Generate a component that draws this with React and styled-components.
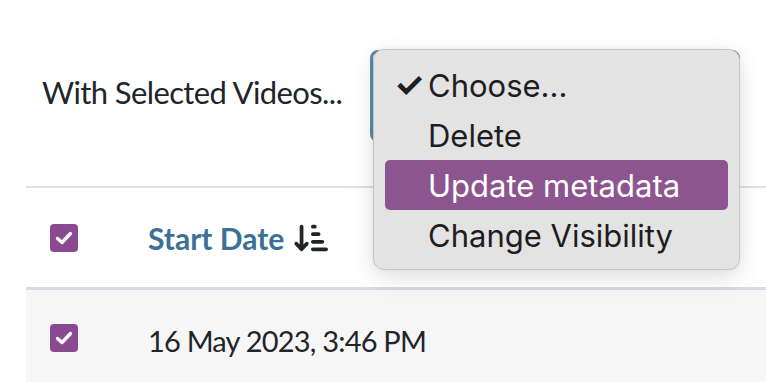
import React, { useState } from "react";
import styled, { createGlobalStyle } from "styled-components";
import { FaArrowDownShortWide } from "react-icons/fa6";

const GlobalStyle = createGlobalStyle`
    html, body {
        margin: 0;
        padding: 0;
        background: #ffffff;
        overflow: hidden;
    }
    * { box-sizing: border-box; }
`;

const options = ["Choose...", "Delete", "Update metadata", "Change Visibility"];

const rows = [{ id: 1, start: "16 May 2023, 3:46 PM", checked: true }];

// Main page component
const App = () => {
    const [selected] = useState(0);
    const [hovered] = useState(2);

    return (
        <>
            <GlobalStyle />
            <Page>
                <Toolbar>
                    <Label>With Selected Videos...</Label>
                    <SelectBox />
                </Toolbar>
                <Table>
                    <HeadRow>
                        <CheckCell>
                            <CheckBox checked />
                        </CheckCell>
                        <HeadCell>
                            Start Date
                            <SortIcon>
                                <FaArrowDownShortWide />
                            </SortIcon>
                        </HeadCell>
                    </HeadRow>
                    {rows.map((row) => (
                        <BodyRow key={row.id}>
                            <CheckCell>
                                <CheckBox checked={row.checked} />
                            </CheckCell>
                            <Cell>{row.start}</Cell>
                        </BodyRow>
                    ))}
                </Table>
                <Menu>
                    {options.map((opt, i) => (
                        <MenuItem key={opt} active={i === hovered}>
                            <Tick>{i === selected ? "✓" : ""}</Tick>
                            {opt}
                        </MenuItem>
                    ))}
                </Menu>
            </Page>
        </>
    );
};

const CheckBox = ({ checked }) => (
    <Box>
        {checked && (
            <svg width="24" height="24" viewBox="0 0 24 24">
                <path d="M5.5 12.5 L10 16.5 L18.5 7.5" fill="none" stroke="#ffffff" strokeWidth="3.4" strokeLinecap="round" strokeLinejoin="round" />
            </svg>
        )}
    </Box>
);

const Page = styled.div`
    position: relative;
    width: 766px;
    height: 382px;
    padding-left: 26px;
    font-family: "Lato", "Open Sans", sans-serif;
    color: #212529;
`;
const Toolbar = styled.div`
    height: 186px;
    display: flex;
    align-items: flex-start;
    padding-left: 16px;
`;
const Label = styled.div`
    font-size: 31px;
    letter-spacing: -0.6px;
    width: 328px;
    margin-top: 73px;
`;
const SelectBox = styled.div`
    margin-top: 50px;
    width: 370px;
    height: 92px;
    border: 3px solid #5e8bab;
    border-radius: 8px;
    background: #ffffff;
`;
const Table = styled.div`
    border-top: 2px solid #dee2e6;
`;
const HeadRow = styled.div`
    display: flex;
    align-items: center;
    height: 102px;
    border-bottom: 3px solid #d8dce2;
`;
const BodyRow = styled.div`
    display: flex;
    align-items: center;
    height: 92px;
    padding-top: 4px;
    background: #f6f6f7;
`;
const CheckCell = styled.div`
    width: 122px;
    padding-left: 24px;
    display: flex;
    align-items: center;
`;
const Box = styled.div`
    width: 28px;
    height: 28px;
    border-radius: 4px;
    background: #894a92;
    display: flex;
    align-items: center;
    justify-content: center;
`;
const HeadCell = styled.div`
    display: flex;
    align-items: center;
    font-size: 30px;
    font-weight: 700;
    color: #3a7196;
`;
const SortIcon = styled.span`
    display: inline-flex;
    margin-left: 10px;
    color: #212529;
    font-size: 34px;
`;
const Cell = styled.div`
    font-size: 29px;
    letter-spacing: -0.8px;
    padding-top: 4px;
`;
const Menu = styled.div`
    position: absolute;
    left: 373px;
    top: 49px;
    width: 367px;
    height: 221px;
    padding: 10px 11px;
    background: #e3e3e3;
    border: 1px solid #c4c4c4;
    border-radius: 11px;
    box-shadow: 0 8px 24px rgba(0, 0, 0, 0.12), 0 0 6px rgba(0, 0, 0, 0.06);
    font-family: "Inter", "Liberation Sans", sans-serif;
`;
const MenuItem = styled.div`
    display: flex;
    align-items: center;
    height: 50px;
    padding-left: 10px;
    border-radius: 5px;
    font-size: 31px;
    color: ${(p) => (p.active ? "#ffffff" : "#1e1e1e")};
    background: ${(p) => (p.active ? "#8d558f" : "transparent")};
`;
const Tick = styled.span`
    width: 34px;
    margin-left: -1px;
    font-size: 34px;
    font-weight: 700;
    line-height: 1;
`;

export default App;
